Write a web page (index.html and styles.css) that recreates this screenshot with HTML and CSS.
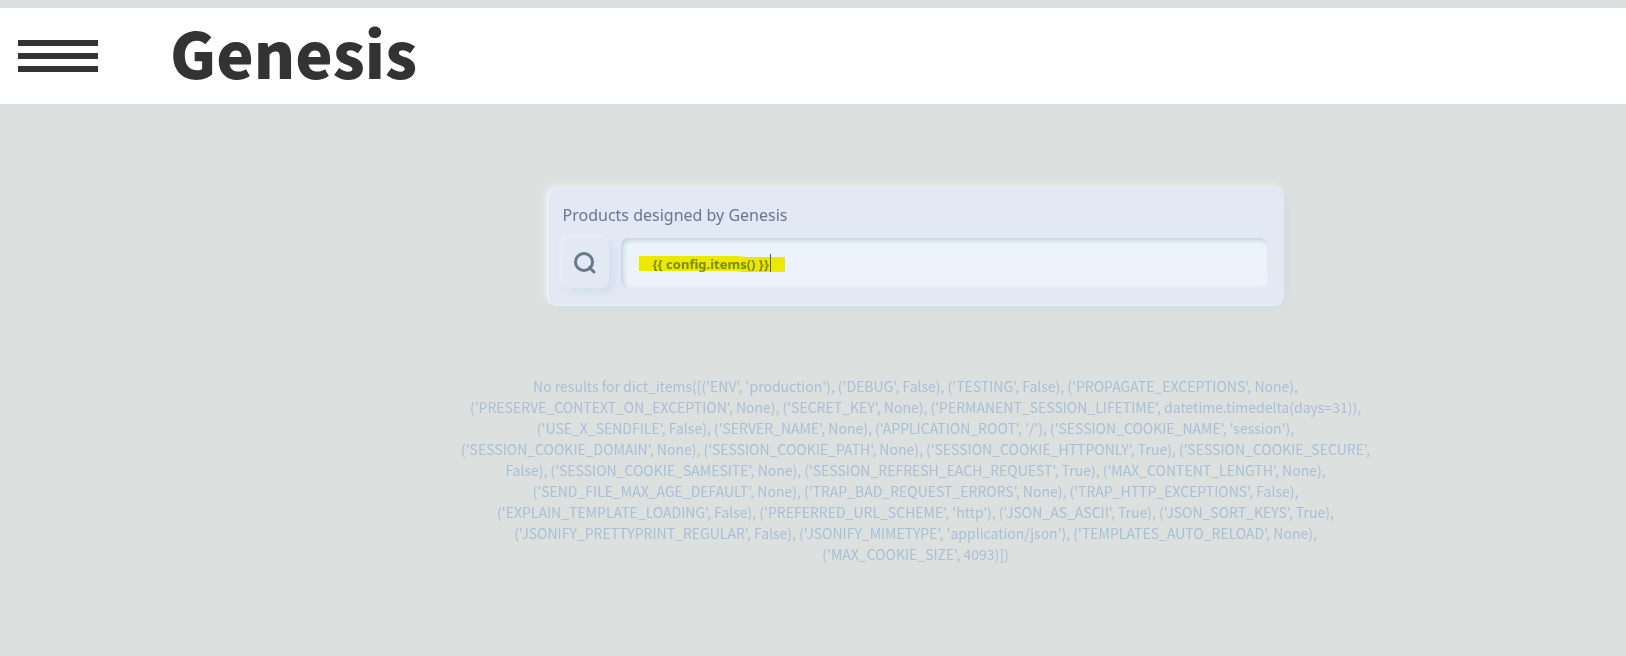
FILE: index.html
```html
<!DOCTYPE html>
<html lang="en">
<head>
<meta charset="utf-8">
<title>Genesis</title>
<link rel="stylesheet" href="styles.css">
</head>
<body>
<header class="topbar">
  <button class="menu" type="button" aria-label="Menu"><span class="bar"></span><span class="bar"></span><span class="bar"></span></button>
  <h1 class="brand">Genesis</h1>
</header>
<main class="content">
  <form class="search">
    <label class="search-label" for="query">Products designed by Genesis</label>
    <div class="search-row">
      <button class="search-button" type="button" aria-label="Search">
        <svg class="search-icon" viewBox="0 0 24 24" width="24" height="24" fill="none" stroke="#66798a" stroke-width="3"><circle cx="11" cy="11" r="8.5"/><path d="M16.5 16.5 L21 21" stroke-linecap="round"/></svg>
      </button>
      <div class="field">
        <input class="query" id="query" type="text" value="{{ config.items() }}">
        <svg class="marker" viewBox="0 0 146 16" width="146" height="16"><path d="M0 0H98L108 1H146V16H102L98 15H0Z" fill="#fff400"/></svg>
        <span class="caret"></span>
      </div>
    </div>
  </form>
  <p class="results">No results for dict_items([('ENV', 'production'), ('DEBUG', False), ('TESTING', False), ('PROPAGATE_EXCEPTIONS', None), ('PRESERVE_CONTEXT_ON_EXCEPTION', None), ('SECRET_KEY', None), ('PERMANENT_SESSION_LIFETIME', datetime.timedelta(days=31)), ('USE_X_SENDFILE', False), ('SERVER_NAME', None), ('APPLICATION_ROOT', '/'), ('SESSION_COOKIE_NAME', 'session'), ('SESSION_COOKIE_DOMAIN', None), ('SESSION_COOKIE_PATH', None), ('SESSION_COOKIE_HTTPONLY', True), ('SESSION_COOKIE_SECURE', False), ('SESSION_COOKIE_SAMESITE', None), ('SESSION_REFRESH_EACH_REQUEST', True), ('MAX_CONTENT_LENGTH', None), ('SEND_FILE_MAX_AGE_DEFAULT', None), ('TRAP_BAD_REQUEST_ERRORS', None), ('TRAP_HTTP_EXCEPTIONS', False), ('EXPLAIN_TEMPLATE_LOADING', False), ('PREFERRED_URL_SCHEME', 'http'), ('JSON_AS_ASCII', True), ('JSON_SORT_KEYS', True), ('JSONIFY_PRETTYPRINT_REGULAR', False), ('JSONIFY_MIMETYPE', 'application/json'), ('TEMPLATES_AUTO_RELOAD', None), ('MAX_COOKIE_SIZE', 4093)])</p>
</main>
</body>
</html>
```

FILE: styles.css
```css
* { box-sizing: border-box; }
body {
  margin: 0;
  padding-top: 8px;
  background: #dce0df;
  font-family: "Noto Sans CJK SC", "Noto Sans", sans-serif;
}
.topbar {
  display: flex;
  align-items: center;
  gap: 72px;
  height: 96px;
  padding: 0 18px;
  background: #fff;
}
.menu {
  display: flex;
  flex-direction: column;
  gap: 7px;
  width: 80px;
  padding: 0;
  border: 0;
  background: none;
}
.bar { height: 6px; background: #333; }
.brand {
  margin: 0;
  padding-bottom: 8px;
  font-size: 63px;
  line-height: 88px;
  font-weight: 900;
  color: #333;
}
.content {
  display: flex;
  flex-direction: column;
  align-items: center;
  gap: 70px;
  margin-left: 205px;
  padding: 83px 0 32px;
}
.search {
  width: 100%;
  max-width: 738px;
  padding: 15px 16px 17px 15px;
  border: 1px solid;
  border-color: #e6eff3 #d3dfea #e6eff3 #f2f7fb;
  border-radius: 10px;
  background: #e2e8f4;
  box-shadow: 4px 4px 8px #d1dde3, -2px -2px 6px #e9f1ef;
}
.search-label {
  display: block;
  margin-bottom: 11px;
  font: 16px/24px "Noto Sans", sans-serif;
  color: #66798f;
}
.search-row { display: flex; gap: 12px; }
.search-button {
  display: flex;
  align-items: center;
  justify-content: center;
  width: 46px;
  height: 50px;
  padding: 0 2px 0 0;
  border: 0;
  border-radius: 8px;
  background: #e2e8f4;
  box-shadow: 4px 4px 8px #d2dfeb, -2px -2px 5px #edf2fa;
}
.search-icon { display: block; }
.field { position: relative; flex: 1; }
.query {
  display: block;
  width: 100%;
  height: 50px;
  padding: 2px 32px 0;
  border: 0;
  border-radius: 8px;
  outline: 0;
  background: #ecf3fb;
  box-shadow: inset 2px 2px 5px #bccfde, inset -4px -3px 6px #eff3f6;
  font: 700 13px/18px "Noto Sans", sans-serif;
  color: #7a929c;
}
.marker {
  position: absolute;
  left: 18px;
  top: 18px;
  mix-blend-mode: multiply;
  pointer-events: none;
}
.caret {
  position: absolute;
  left: 149px;
  top: 16px;
  width: 1px;
  height: 18px;
  background: #45606a;
}
.results {
  max-width: 924px;
  margin: 0;
  font-size: 14px;
  line-height: 21px;
  text-align: center;
  color: #a9bfd6;
}
```
